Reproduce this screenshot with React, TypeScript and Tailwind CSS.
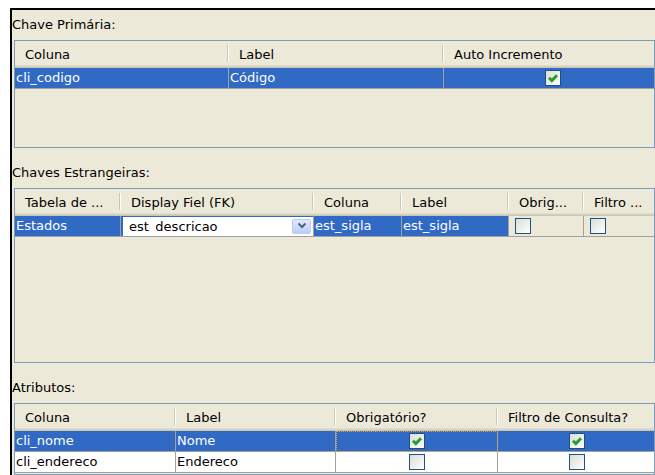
import React from "react";

type Col = { title: string; w: string; last?: boolean };

const SEL = "bg-[#316ac5] text-white";

function Check({ checked }: { checked?: boolean }) {
  return (
    <div className="h-[16px] w-[16px] shrink-0 border border-[#1c5180] bg-gradient-to-br from-[#dcdcd7] to-white">
      {checked && (
        <svg viewBox="0 0 14 14" className="h-[14px] w-[14px]">
          <polyline
            points="3,6.8 5.8,9.6 11,4.2"
            fill="none"
            stroke="#21a121"
            strokeWidth="2.9"
          />
        </svg>
      )}
    </div>
  );
}

function HeaderRow({ cols }: { cols: Col[] }) {
  return (
    <div className="flex h-[27px] shrink-0 shadow-[inset_0_-1px_0_#cbc7b8,inset_0_-2px_0_#d6d2c2,inset_0_-3px_0_#e2decd]">
      {cols.map((c) => (
        <div key={c.title} className={`flex h-full shrink-0 ${c.w}`}>
          <div className="flex-1 overflow-hidden whitespace-nowrap pl-[10px] pt-[1px] leading-[26px]">
            {c.title}
          </div>
          {!c.last && (
            <div className="mb-[6px] mt-[4px] w-[2px] border-l border-r border-l-[#cac7b6] border-r-white" />
          )}
        </div>
      ))}
    </div>
  );
}

function Cell({
  w,
  className = "",
  last,
  children,
}: {
  w: string;
  className?: string;
  last?: boolean;
  children?: React.ReactNode;
}) {
  return (
    <div
      className={`flex h-full shrink-0 items-center overflow-hidden whitespace-nowrap border-b border-[#a0a0a0] pl-[1px] leading-[20px] ${
        last ? "" : "border-r"
      } ${w} ${className}`}
    >
      {children}
    </div>
  );
}

function Row({ children }: { children: React.ReactNode }) {
  return <div className="flex h-[21px] shrink-0">{children}</div>;
}

function Table({
  cols,
  className,
  children,
}: {
  cols: Col[];
  className: string;
  children: React.ReactNode;
}) {
  return (
    <div
      className={`ml-[2px] flex w-[641px] shrink-0 flex-col overflow-hidden border border-[#7f9db9] bg-[#ece9d8] ${className}`}
    >
      <HeaderRow cols={cols} />
      {children}
    </div>
  );
}

function SectionLabel({ className, children }: { className: string; children: React.ReactNode }) {
  return <div className={`shrink-0 whitespace-nowrap leading-[15px] ${className}`}>{children}</div>;
}

function Combo({ value }: { value: string }) {
  return (
    <div className="ml-[1px] flex h-[19px] w-[191px] items-center bg-white pl-[6px] pr-[2px] text-black">
      <div className="h-[13px] flex-1 overflow-hidden leading-[14px]">{value}</div>
      <div className="flex h-[15px] w-[19px] items-center justify-center rounded-[2px] border border-[#b9ccf2] bg-gradient-to-b from-[#e1eafe] to-[#b8cdf8]">
        <svg viewBox="0 0 10 8" className="h-[8px] w-[10px]">
          <polyline points="1.5,1.5 5,5 8.5,1.5" fill="none" stroke="#4d6185" strokeWidth="2" />
        </svg>
      </div>
    </div>
  );
}

const pkCols: Col[] = [
  { title: "Coluna", w: "w-[214px]" },
  { title: "Label", w: "w-[215px]" },
  { title: "Auto Incremento", w: "w-[210px]", last: true },
];

const fkCols: Col[] = [
  { title: "Tabela de ...", w: "w-[106px]" },
  { title: "Display Fiel (FK)", w: "w-[193px]" },
  { title: "Coluna", w: "w-[88px]" },
  { title: "Label", w: "w-[107px]" },
  { title: "Obrig...", w: "w-[75px]" },
  { title: "Filtro ...", w: "w-[70px]", last: true },
];

const attrCols: Col[] = [
  { title: "Coluna", w: "w-[161px]" },
  { title: "Label", w: "w-[160px]" },
  { title: "Obrigatório?", w: "w-[162px]" },
  { title: "Filtro de Consulta?", w: "w-[156px]", last: true },
];

export default function App() {
  return (
    <div className="h-[475px] w-[655px] overflow-hidden bg-white font-['DejaVu_Sans',sans-serif] text-[13px] text-black">
      <div className="ml-[10px] mt-[8px] flex h-[467px] flex-col border-l-2 border-t-2 border-black bg-[#ece9d8]">
        <SectionLabel className="h-[30px] pt-[7px]">Chave Primária:</SectionLabel>
        <Table cols={pkCols} className="h-[108px]">
          <Row>
            <Cell w="w-[214px]" className={SEL}>cli_codigo</Cell>
            <Cell w="w-[215px]" className={SEL}>Código</Cell>
            <Cell w="w-[210px]" className={`${SEL} justify-center pl-[8px]`} last>
              <Check checked />
            </Cell>
          </Row>
        </Table>

        <SectionLabel className="h-[40px] pt-[17px]">Chaves Estrangeiras:</SectionLabel>
        <Table cols={fkCols} className="h-[175px]">
          <Row>
            <Cell w="w-[106px]" className={SEL}>Estados</Cell>
            <Cell w="w-[193px]" className="bg-[#316ac5] pl-0">
              <Combo value="est_descricao" />
            </Cell>
            <Cell w="w-[88px]" className={SEL}>est_sigla</Cell>
            <Cell w="w-[107px]" className={SEL}>est_sigla</Cell>
            <Cell w="w-[75px]" className="pl-[6px]">
              <Check />
            </Cell>
            <Cell w="w-[70px]" className="pl-[6px]" last>
              <Check />
            </Cell>
          </Row>
        </Table>

        <SectionLabel className="h-[40px] pt-[17px]">Atributos:</SectionLabel>
        <Table cols={attrCols} className="flex-1">
          <Row>
            <Cell w="w-[161px]" className={SEL}>cli_nome</Cell>
            <Cell w="w-[160px]" className={SEL}>Nome</Cell>
            <Cell
              w="w-[162px]"
              className={`${SEL} justify-center outline outline-1 -outline-offset-1 outline-dotted outline-[#d9a441]`}
            >
              <Check checked />
            </Cell>
            <Cell w="w-[156px]" className={`${SEL} justify-center`} last>
              <Check checked />
            </Cell>
          </Row>
          <Row>
            <Cell w="w-[161px]" className="bg-white">cli_endereco</Cell>
            <Cell w="w-[160px]" className="bg-white">Endereco</Cell>
            <Cell w="w-[162px]" className="justify-center bg-white">
              <Check />
            </Cell>
            <Cell w="w-[156px]" className="justify-center bg-white" last>
              <Check />
            </Cell>
          </Row>
        </Table>
      </div>
    </div>
  );
}
